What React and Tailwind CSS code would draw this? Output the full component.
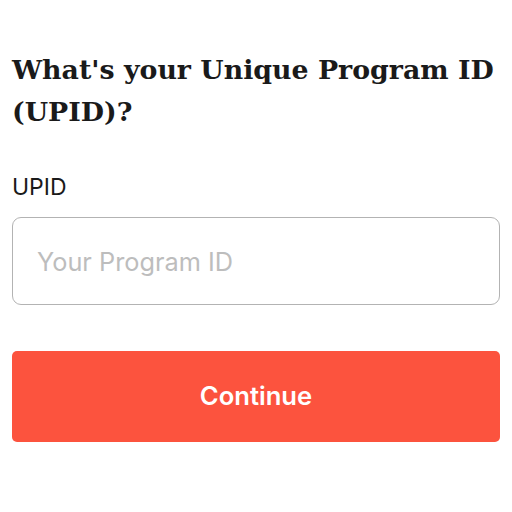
import React, { useState } from 'react'

const App = () => {
    const [upid, setUpid] = useState("");

    return (
        <div className="min-h-screen w-[512px] bg-white px-3 pt-[49px]" style={{ fontFamily: 'Inter, "Liberation Sans", Arial, sans-serif' }}>
            <h2
                className="max-w-[496px] text-[26.8px] font-bold leading-[42px] text-[#1a1a1a]"
                style={{ fontFamily: '"DejaVu Serif", "Liberation Serif", serif' }}
            >
                What's your Unique Program ID (UPID)?
            </h2>

            <label htmlFor="upid" className="mt-[42px] block text-[23px] leading-[24px] text-[#1a1a1a]">
                UPID
            </label>
            <input
                id="upid"
                name="upid"
                type="text"
                value={upid}
                onChange={(e) => setUpid(e.target.value)}
                placeholder="Your Program ID"
                className="mt-[18px] block h-[88px] w-full rounded-[9px] border border-[#b3b3b3] px-6 text-[25.3px] text-[#222] placeholder:text-[#bdbdbd] outline-none"
            />

            <button
                type="button"
                className="mt-[46px] block h-[91px] w-full rounded-[5px] bg-[#fc533e] text-[25.6px] font-semibold text-white"
            >
                Continue
            </button>
        </div>
    )
}

export default App
